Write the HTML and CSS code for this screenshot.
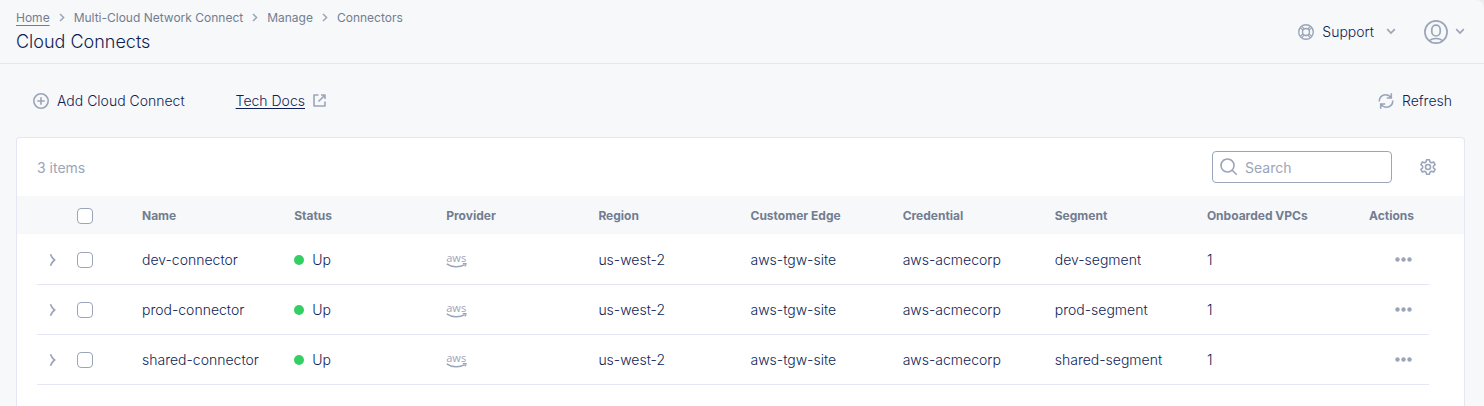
FILE: index.html
```html
<!DOCTYPE html>
<html lang="en">
<head>
<meta charset="utf-8">
<title>Cloud Connects</title>
<link rel="stylesheet" href="styles.css">
</head>
<body>
<svg class="defs" aria-hidden="true">
  <symbol id="crumb" viewBox="0 0 6 9"><path d="M1 1l3.600 3.500L1 8" fill="none" stroke="currentColor" stroke-width="1.500"/></symbol>
  <symbol id="down" viewBox="0 0 10 7"><path d="M1.200 1.200L5 5l3.800-3.800" fill="none" stroke="currentColor" stroke-width="1.700"/></symbol>
  <symbol id="expand" viewBox="0 0 8 14"><path d="M1.500 1.200c.8 2.400 2.100 4.300 4 5.800-1.900 1.500-3.200 3.400-4 5.800" fill="none" stroke="currentColor" stroke-width="1.700"/></symbol>
  <symbol id="smile" viewBox="0 0 22 5">
    <path d="M.8 .8c5 3.600 12.500 3.800 18 .8" fill="none" stroke="currentColor" stroke-width="1.500"/>
    <path d="M16.800 .7c2-.6 3.300-.4 3.300-.1 0 .7-.4 1.900-1.200 2.800" fill="none" stroke="currentColor" stroke-width="1.200"/>
  </symbol>
  <symbol id="dots" viewBox="0 0 17 5"><g fill="currentColor"><circle cx="2.500" cy="2.500" r="2.200"/><circle cx="8.500" cy="2.500" r="2.200"/><circle cx="14.500" cy="2.500" r="2.200"/></g></symbol>
</svg>
<div class="app">
  <header class="top">
    <div class="heading">
      <nav class="crumbs" aria-label="Breadcrumb">
        <a href="#">Home</a><svg class="i-crumb"><use href="#crumb"/></svg>
        <span>Multi-Cloud Network Connect</span><svg class="i-crumb"><use href="#crumb"/></svg>
        <span>Manage</span><svg class="i-crumb"><use href="#crumb"/></svg>
        <span>Connectors</span>
      </nav>
      <h1>Cloud Connects</h1>
    </div>
    <div class="user-tools">
      <button class="plain support" type="button">
        <svg class="i-16" viewBox="0 0 16 16" fill="none" stroke="currentColor"><circle cx="8" cy="8" r="7.300" stroke-width="1.400"/><circle cx="8" cy="8" r="3.500" stroke-width="1.400"/><path d="M2.300 3.800l2.800 2.500M3.800 2.300l2.500 2.800M12.200 2.300L9.700 5.100M13.700 3.800l-2.800 2.500M13.700 12.200l-2.800-2.500M12.200 13.700l-2.500-2.800M3.800 13.700l2.500-2.800M2.300 12.200l2.800-2.500" stroke-width="1.200"/></svg>
        <span>Support</span>
        <svg class="i-down"><use href="#down"/></svg>
      </button>
      <button class="plain account" type="button" aria-label="Account">
        <svg class="i-24" viewBox="0 0 24 24" fill="none" stroke="currentColor" stroke-width="1.700"><circle cx="12" cy="12" r="11.100"/><rect x="7.800" y="5.200" width="8.400" height="10.800" rx="4.200"/><path d="M5.800 20.800c1-1.600 3.200-2.300 6.200-2.300s5.200.7 6.200 2.300"/></svg>
        <svg class="i-down"><use href="#down"/></svg>
      </button>
    </div>
  </header>
  <main class="content">
    <div class="toolbar">
      <button class="plain add" type="button">
        <svg class="i-16" viewBox="0 0 16 16" fill="none" stroke="currentColor" stroke-width="1.600"><circle cx="8" cy="8" r="7.200"/><path d="M8 4.300v7.400M4.300 8h7.400"/></svg>
        <span>Add Cloud Connect</span>
      </button>
      <a class="docs" href="#"><span>Tech Docs</span>
        <svg class="i-13" viewBox="0 0 13 13" fill="none" stroke="currentColor" stroke-width="1.600" stroke-linejoin="round"><path d="M5.500 1H1v11h11V7.500M8 1h4v4M12 1L5.500 7.500"/></svg>
      </a>
      <button class="plain refresh" type="button">
        <svg class="i-16" viewBox="0 0 16 16" fill="none" stroke="currentColor" stroke-width="1.600"><path d="M1.200 8.500C1 4.500 4 1.800 7.500 1.800c2.500 0 4.300 1.200 5.700 3.100M13.300.3v4.700H8.800M14.800 7.500c.2 4-2.800 6.700-6.300 6.700-2.500 0-4.300-1.200-5.700-3.100M2.700 15.700V11h4.500"/></svg>
        <span>Refresh</span>
      </button>
    </div>
    <section class="card">
      <div class="card-bar">
        <span class="count">3 items</span>
        <label class="search">
          <svg class="i-18" viewBox="0 0 18 18" fill="none" stroke="currentColor" stroke-width="1.600"><circle cx="7.500" cy="7.500" r="6.500"/><path d="M12 12l4.800 4.800"/></svg>
          <input type="search" placeholder="Search" aria-label="Search">
        </label>
        <button class="plain gear" type="button" aria-label="Table settings">
          <svg class="i-16" viewBox="0 0 16 16" fill="none" stroke="currentColor" stroke-width="1.600" stroke-linejoin="round"><path d="M6.500.8h3l.4 2.100 1.500.9 2.200-.8 1.500 2.600-1.700 1.400v2l1.700 1.400-1.500 2.600-2.200-.8-1.500.9-.4 2.100h-3l-.4-2.100-1.500-.9-2.200.8L.9 10.400 2.600 9V7L.9 5.600 2.400 3l2.200.8 1.500-.9z"/><circle cx="8" cy="8" r="2.500"/></svg>
        </button>
      </div>
      <div class="table-wrap">
        <table>
          <colgroup><col class="c-expand"><col class="c-check"><col span="8"><col class="c-actions"></colgroup>
          <thead>
            <tr><th></th><th><input type="checkbox" aria-label="Select all"></th><th>Name</th><th>Status</th><th>Provider</th><th>Region</th><th>Customer Edge</th><th>Credential</th><th>Segment</th><th>Onboarded VPCs</th><th class="actions-head">Actions</th></tr>
          </thead>
          <tbody>
            <tr>
              <td class="expand"><button class="plain" type="button" aria-label="Expand dev-connector"><svg class="i-expand"><use href="#expand"/></svg></button></td>
              <td><input type="checkbox" aria-label="Select dev-connector"></td>
              <td>dev-connector</td><td><span class="status">Up</span></td>
              <td><span class="aws">aws<svg class="i-smile"><use href="#smile"/></svg></span></td>
              <td>us-west-2</td><td>aws-tgw-site</td><td>aws-acmecorp</td><td>dev-segment</td><td>1</td>
              <td class="actions"><button class="plain" type="button" aria-label="Actions for dev-connector"><svg class="i-dots"><use href="#dots"/></svg></button></td>
            </tr>
            <tr>
              <td class="expand"><button class="plain" type="button" aria-label="Expand prod-connector"><svg class="i-expand"><use href="#expand"/></svg></button></td>
              <td><input type="checkbox" aria-label="Select prod-connector"></td>
              <td>prod-connector</td><td><span class="status">Up</span></td>
              <td><span class="aws">aws<svg class="i-smile"><use href="#smile"/></svg></span></td>
              <td>us-west-2</td><td>aws-tgw-site</td><td>aws-acmecorp</td><td>prod-segment</td><td>1</td>
              <td class="actions"><button class="plain" type="button" aria-label="Actions for prod-connector"><svg class="i-dots"><use href="#dots"/></svg></button></td>
            </tr>
            <tr>
              <td class="expand"><button class="plain" type="button" aria-label="Expand shared-connector"><svg class="i-expand"><use href="#expand"/></svg></button></td>
              <td><input type="checkbox" aria-label="Select shared-connector"></td>
              <td>shared-connector</td><td><span class="status">Up</span></td>
              <td><span class="aws">aws<svg class="i-smile"><use href="#smile"/></svg></span></td>
              <td>us-west-2</td><td>aws-tgw-site</td><td>aws-acmecorp</td><td>shared-segment</td><td>1</td>
              <td class="actions"><button class="plain" type="button" aria-label="Actions for shared-connector"><svg class="i-dots"><use href="#dots"/></svg></button></td>
            </tr>
          </tbody>
        </table>
      </div>
    </section>
  </main>
</div>
</body>
</html>
```
FILE: styles.css
```css
:root {
  --ink: #0f1e57;
  --muted: #727d91;
  --icon: #9ba5b9;
  --line: #e4e6f3;
  --page: #f7f8fa;
}
* { box-sizing: border-box; }
body {
  margin: 0;
  background: #ededee;
  color: var(--ink);
  font: 300 14px/20px Inter, "Liberation Sans", sans-serif;
}
svg { display: block; flex: none; color: var(--icon); }
.defs { position: absolute; width: 0; height: 0; }
.app {
  display: flex;
  flex-direction: column;
  min-height: 100vh;
  background: var(--page);
  border-top-right-radius: 8px;
}
.plain {
  display: inline-flex;
  align-items: center;
  padding: 0;
  border: 0;
  background: none;
  color: inherit;
  font: inherit;
  cursor: pointer;
}
.i-crumb { width: 6px; height: 9px; margin: 0 9px; }
.i-down { width: 10px; height: 7px; }
.i-13 { width: 13px; height: 13px; }
.i-16 { width: 16px; height: 16px; }
.i-18 { width: 18px; height: 18px; }
.i-24 { width: 24px; height: 24px; }
.i-expand { width: 8px; height: 14px; }
.i-smile { width: 22px; height: 5px; }
.i-dots { width: 17px; height: 5px; }
.aws {
  display: flex;
  flex-direction: column;
  color: var(--icon);
  font: 500 11px/11px "Open Sans", sans-serif;
}

.top {
  display: flex;
  align-items: center;
  justify-content: space-between;
  height: 64px;
  padding: 0 19px 0 16px;
  border-bottom: 1px solid var(--line);
}
.crumbs {
  display: flex;
  align-items: center;
  font-size: 12px;
  font-weight: 400;
  line-height: 16px;
  color: var(--muted);
}
.crumbs a { color: inherit; text-underline-offset: 3px; }
h1 { margin: 4px 0 0; font-size: 18px; font-weight: 300; line-height: 24px; }
.user-tools { display: flex; align-items: center; gap: 28px; }
.support { gap: 8px; }
.support .i-down { margin-left: 4px; }
.account { gap: 7px; }

.content { display: flex; flex: 1; flex-direction: column; padding: 0 19px 0 16px; }
.toolbar { display: flex; align-items: center; height: 73px; padding: 0 13px 0 17px; }
.add, .refresh { gap: 8px; }
.docs {
  display: flex;
  align-items: center;
  gap: 8px;
  margin-left: 51px;
  color: inherit;
  text-decoration: none;
}
.docs span { text-decoration: underline; text-underline-offset: 2px; }
.refresh { margin-left: auto; }

.card {
  flex: 1;
  border: 1px solid var(--line);
  border-bottom: 0;
  border-radius: 4px 4px 0 0;
  background: #fff;
}
.card-bar { display: flex; align-items: center; height: 58px; padding: 0 28px 0 20px; }
.count { margin-right: auto; padding-top: 2px; color: var(--icon); font-weight: 400; }
.search {
  display: flex;
  align-items: center;
  gap: 7px;
  width: 180px;
  height: 32px;
  margin-right: 28px;
  padding: 0 7px;
  border: 1px solid var(--icon);
  border-radius: 4px;
}
.search input {
  flex: 1;
  min-width: 0;
  padding: 2px 0 0;
  border: 0;
  outline: 0;
  background: none;
  color: var(--ink);
  font: inherit;
}
.search input::placeholder { color: var(--icon); font-weight: 400; }

.table-wrap { padding: 0 35px 0 20px; }
table { width: 100%; table-layout: fixed; border-spacing: 0; }
.c-expand { width: 40px; }
.c-check { width: 65px; }
.c-actions { width: 70px; }
th, td { padding: 0; text-align: left; }
th {
  height: 38px;
  padding-top: 2px;
  background: var(--page);
  color: var(--muted);
  font-size: 12px;
  font-weight: 700;
}
th:first-child { box-shadow: -20px 0 var(--page); }
th:last-child { box-shadow: 35px 0 var(--page); }
td { height: 50px; border-bottom: 1px solid var(--line); }
tbody tr:first-child td { height: 51px; padding-top: 1px; }
th.actions-head { padding-right: 15px; text-align: right; }
td.expand { padding-left: 12px; }
.expand .plain { display: flex; }
.actions .plain { display: flex; margin: 0 17px 0 auto; }
.status { display: flex; align-items: center; gap: 8px; }
.status::before {
  content: "";
  width: 10px;
  height: 10px;
  border-radius: 50%;
  background: #34cf63;
}
input[type="checkbox"] {
  display: block;
  appearance: none;
  width: 16px;
  height: 16px;
  margin: 0;
  border: 1px solid var(--icon);
  border-radius: 4px;
  background: #fff;
}
```
